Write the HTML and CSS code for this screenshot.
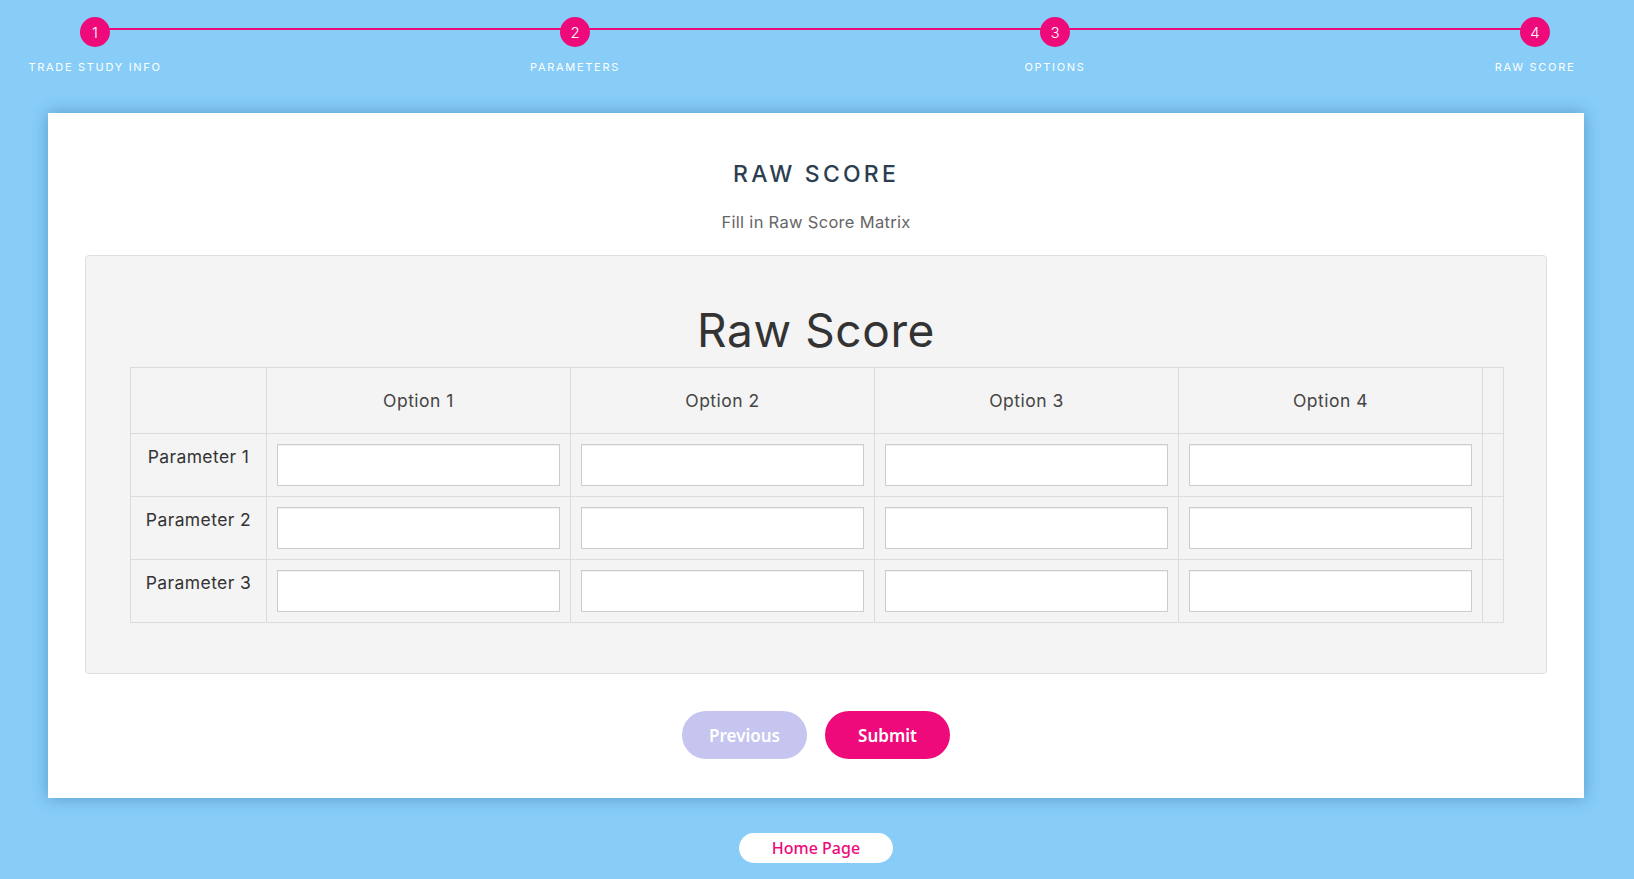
FILE: index.html
```html
<!DOCTYPE html>
<html>
<head>
<meta charset="utf-8">
<link rel="stylesheet" href="styles.css">
</head>
<body>
<div class="page">
  <div class="steps">
    <div class="step"><div class="dot">1</div><div class="label">Trade Study Info</div></div>
    <div class="step"><div class="dot">2</div><div class="label">Parameters</div></div>
    <div class="step"><div class="dot">3</div><div class="label">Options</div></div>
    <div class="step"><div class="dot">4</div><div class="label">Raw Score</div></div>
  </div>

  <div class="card">
    <h2 class="title">RAW SCORE</h2>
    <p class="subtitle">Fill in Raw Score Matrix</p>
    <div class="panel">
      <h1 class="panel-title">Raw Score</h1>
      <table class="matrix">
        <colgroup>
          <col class="c-first"><col class="c-opt"><col class="c-opt"><col class="c-opt"><col class="c-opt"><col class="c-last">
        </colgroup>
        <thead>
          <tr><th></th><th>Option 1</th><th>Option 2</th><th>Option 3</th><th>Option 4</th><th></th></tr>
        </thead>
        <tbody>
          <tr><td class="rowhead">Parameter 1</td><td><input type="text"></td><td><input type="text"></td><td><input type="text"></td><td><input type="text"></td><td></td></tr>
          <tr><td class="rowhead">Parameter 2</td><td><input type="text"></td><td><input type="text"></td><td><input type="text"></td><td><input type="text"></td><td></td></tr>
          <tr><td class="rowhead">Parameter 3</td><td><input type="text"></td><td><input type="text"></td><td><input type="text"></td><td><input type="text"></td><td></td></tr>
        </tbody>
      </table>
    </div>
    <div class="actions">
      <button class="btn btn-prev">Previous</button>
      <button class="btn btn-submit">Submit</button>
    </div>
  </div>

  <div class="footer">
    <button class="home">Home Page</button>
  </div>
</div>
</body>
</html>
```

FILE: styles.css
```css
* { box-sizing: border-box; }
html, body { margin: 0; padding: 0; }
body {
  background: #87cdf8;
  font-family: Inter, "Noto Sans", "Liberation Sans", sans-serif;
  color: #333;
  height: 879px;
  overflow: hidden;
}
.page { width: 1634px; }

.steps {
  position: relative;
  display: flex;
  justify-content: space-between;
  width: 1630px;
  padding-top: 17px;
  height: 113px;
}
.steps::before {
  content: "";
  position: absolute;
  left: 95px;
  right: 95px;
  top: 28px;
  height: 2px;
  background: #ee0a7a;
}
.step {
  position: relative;
  width: 190px;
  display: flex;
  flex-direction: column;
  align-items: center;
}
.dot {
  width: 30px;
  height: 30px;
  border-radius: 50%;
  background: #ee0a7a;
  color: #fff;
  font-size: 15px;
  font-weight: 300;
  display: flex;
  align-items: center;
  justify-content: center;
}
.label {
  margin-top: 13px;
  color: #fff;
  font-size: 11px;
  letter-spacing: 1.7px;
  text-transform: uppercase;
  white-space: nowrap;
}

.card {
  margin-left: 48px;
  width: 1536px;
  height: 685px;
  background: #fff;
  box-shadow: 0 0 15px rgba(0, 60, 110, 0.35);
  padding: 40px 37px 0;
  display: flex;
  flex-direction: column;
  align-items: center;
}
.title {
  margin: 9px 0 0;
  font-size: 23px;
  font-weight: 500;
  letter-spacing: 3.2px;
  color: #2c3e50;
  line-height: 24px;
}
.subtitle {
  margin: 27px 0 0;
  font-size: 16.5px;
  letter-spacing: 0.3px;
  color: #666;
  line-height: 18px;
}
.panel {
  margin-top: 24px;
  width: 1462px;
  height: 419px;
  background: #f4f4f4;
  border: 1px solid #dedede;
  border-radius: 4px;
  padding: 0 44px;
}
.panel-title {
  margin: 46px 0 0;
  text-align: center;
  font-size: 46px;
  font-weight: 400;
  letter-spacing: 0.6px;
  color: #333;
  line-height: 56px;
  height: 65px;
}
.matrix {
  width: 1372px;
  border-collapse: collapse;
  table-layout: fixed;
}
.c-first { width: 136px; }
.c-opt { width: 304px; }
.c-last { width: 21px; }
.matrix th, .matrix td {
  border: 1px solid #dcdcdc;
  padding: 10px;
}
.matrix th {
  height: 66px;
  font-size: 17.5px;
  letter-spacing: 0.5px;
  font-weight: 400;
  color: #444;
  text-align: center;
  vertical-align: middle;
}
.matrix td {
  height: 63px;
  vertical-align: top;
}
.rowhead {
  text-align: center;
  font-size: 17.5px;
  letter-spacing: 0.4px;
  color: #333;
  padding: 12px 0 0 !important;
  white-space: nowrap;
}
.matrix input {
  display: block;
  width: 100%;
  height: 42px;
  border: 1px solid #cccccc;
  box-shadow: inset 0 1px 1px rgba(0,0,0,0.06);
  background: #fff;
  margin: 0;
}

.actions {
  margin-top: 37px;
  display: flex;
  gap: 18px;
}
.btn {
  width: 125px;
  height: 48px;
  border-radius: 24px;
  border: none;
  color: #fff;
  font-family: "Noto Sans", Inter, sans-serif;
  font-size: 17px;
  font-weight: 600;
}
.btn-prev { background: #c5c5f0; }
.btn-submit { background: #ee0a7a; }

.footer {
  display: flex;
  justify-content: center;
  padding-top: 35px;
  width: 1632px;
}
.home {
  width: 154px;
  height: 30px;
  border-radius: 15px;
  border: none;
  background: #fff;
  color: #ee0a7a;
  font-family: "Noto Sans", Inter, sans-serif;
  font-size: 16px;
  font-weight: 500;
}
```
